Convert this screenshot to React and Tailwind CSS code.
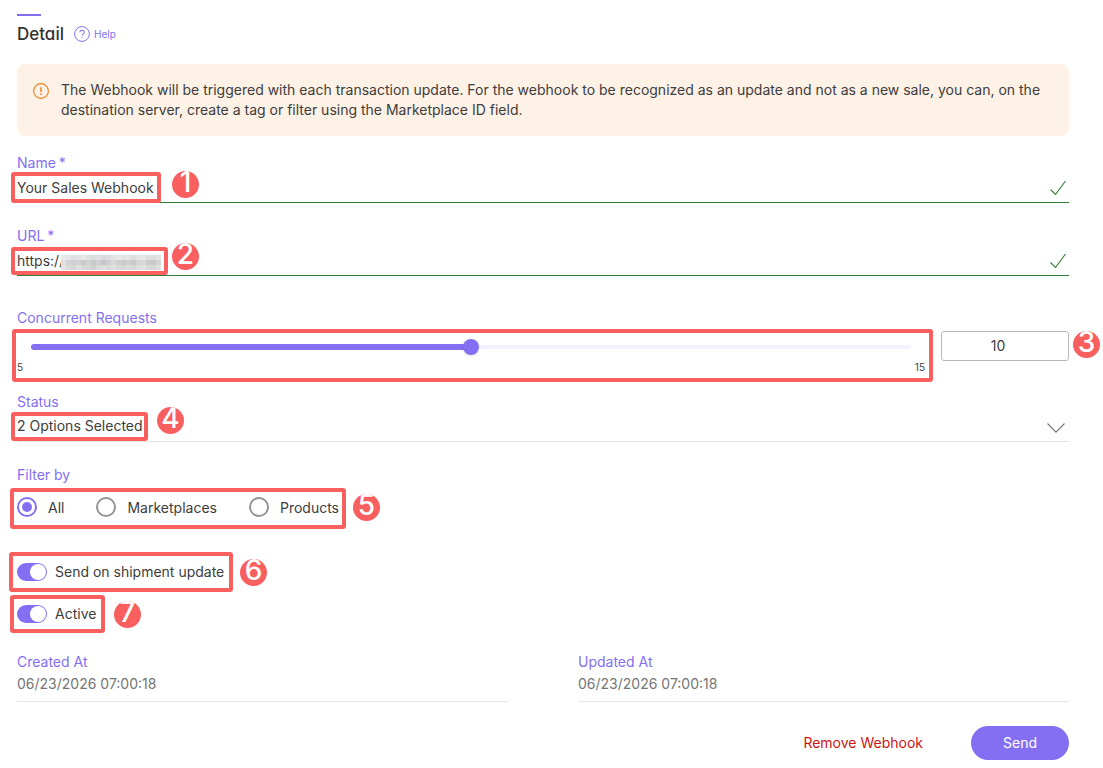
import { useState } from "react";

const labelClass = "block text-[14px] leading-5 text-[#846ff3]";

const mosaicRows = [
  ["#e8e8ea", "#e6e6e8", "#e0e0e2", "#e2e2e3", "#e6e6e6", "#e0e0e2", "#dcdede", "#e0e0e0", "#dadadc", "#dedede", "#e4e4e4", "#e8e8e8", "#e4e4e4", "#e6e6e6", "#dedede", "#e4e4e4", "#e8e8e8", "#e0e0e0", "#dedede", "#e4e4e4"],
  ["#e0e0e2", "#d2d2d4", "#d0d0d0", "#d4d4d6", "#cacaca", "#d0d0d2", "#c8caca", "#d0d0d2", "#c6c6c8", "#cecece", "#d8d8d8", "#d0d0d0", "#cacaca", "#d0d0d0", "#cacaca", "#d6d6d6", "#d8d8d8", "#cccccc", "#c8c8c8", "#d4d4d4"],
  ["#e4e4e4", "#dadada", "#d6d6d6", "#dedede", "#d8d8d8", "#d6d6d6", "#d0d0d2", "#dadada", "#dedede", "#dadada", "#e0e0e0", "#dadada", "#d6d6d6", "#dcdcdc", "#d8d8d8", "#dedede", "#e2e2e2", "#d8d8d8", "#d6d6d6", "#dedede"],
];

function Mosaic({ className }) {
  return (
    <svg aria-hidden="true" viewBox="0 0 100 15" className={className} shapeRendering="crispEdges">
      {mosaicRows.map((row, y) =>
        row.map((fill, x) => <rect key={`${x}-${y}`} x={x * 5} y={y * 5} width="5" height="5" fill={fill} />)
      )}
    </svg>
  );
}

function Frame({ className }) {
  return <span aria-hidden="true" className={`pointer-events-none absolute rounded-[3px] border-4 border-[#fa5f5f] ${className}`} />;
}

function Marker({ n, className }) {
  return (
    <span className={`pointer-events-none absolute flex size-[27px] justify-center overflow-hidden rounded-full bg-[#fa5f5f] text-[28px] font-medium leading-[22px] text-white ${className}`}>
      {n}
    </span>
  );
}

function Check() {
  return (
    <svg aria-hidden="true" viewBox="0 0 16 16" className="mr-[3px] size-4 shrink-0" fill="none" stroke="#2e7d32" strokeWidth="1.1">
      <path d="M0.5 9.5 L5.5 14.5 L15.5 1" />
    </svg>
  );
}

function TextField({ id, label, value, onChange, children }) {
  return (
    <div className="relative">
      <label htmlFor={id} className="flex gap-[3px] text-[14px] leading-5 text-[#846ff3]">
        <span>{label}</span>
        <span>*</span>
      </label>
      <div className="flex h-[30px] items-center border-b border-[#2e7d32]">
        <input id={id} value={value} onChange={(e) => onChange(e.target.value)} className="min-w-0 flex-1 bg-transparent text-[14px] leading-5 outline-none" />
        <Check />
      </div>
      {children}
    </div>
  );
}

function Radio({ label, checked, onChange }) {
  return (
    <label className="flex items-center gap-[11px] text-[14px]">
      <input
        type="radio"
        name="filter"
        checked={checked}
        onChange={onChange}
        className="size-5 appearance-none rounded-full border-2 border-[#949494] bg-white bg-clip-content p-[3px] checked:border-[#846ff3] checked:bg-[#846ff3]"
      />
      <span className="pt-[2px] leading-[18px]">{label}</span>
    </label>
  );
}

function Toggle({ label, checked, onChange }) {
  return (
    <label className="flex items-center gap-2 text-[14px] leading-5">
      <input
        type="checkbox"
        role="switch"
        checked={checked}
        onChange={(e) => onChange(e.target.checked)}
        className="flex h-[18px] w-[30px] appearance-none items-center rounded-full bg-[#b5b5b5] px-px before:size-4 before:rounded-full before:bg-white checked:justify-end checked:bg-[#846ff3]"
      />
      {label}
    </label>
  );
}

function DateField({ label, value }) {
  return (
    <div className="border-b border-[#e4e4e4] pb-[7px]">
      <div className={labelClass}>{label}</div>
      <div className="mt-[2px] text-[14px] leading-5 text-[#757575]">{value}</div>
    </div>
  );
}

export default function App() {
  const [name, setName] = useState("Your Sales Webhook");
  const [url, setUrl] = useState("https://");
  const [requests, setRequests] = useState(10);
  const [filter, setFilter] = useState("All");
  const [shipment, setShipment] = useState(true);
  const [active, setActive] = useState(true);

  return (
    <main className="min-h-screen bg-white pt-[14px] pr-[34px] pb-2 pl-[17px] font-['Inter',sans-serif] text-[14px] text-[#3d3d3d]">
      <div className="h-[2px] w-6 bg-[#846ff3]" />
      <header className="mt-[6px] flex h-6 items-center gap-[10px]">
        <h1 className="text-[17px] font-medium leading-6 text-[#333] [font-feature-settings:'cv11']">Detail</h1>
        <a href="#help" className="flex items-center gap-1 text-[10px] leading-4 text-[#846ff3]">
          <svg aria-hidden="true" viewBox="0 0 16 16" className="size-4" fill="none" stroke="currentColor">
            <circle cx="8" cy="8" r="7.4" />
            <path d="M5.9 6.3a2.1 2.1 0 1 1 3.2 1.8C8.4 8.6 8 8.9 8 9.8" strokeWidth="1.1" />
            <circle cx="8" cy="11.6" r=".7" fill="currentColor" stroke="none" />
          </svg>
          Help
        </a>
      </header>

      <div className="mt-[18px] flex gap-3 rounded-lg bg-[#fef1e6] p-4">
        <svg aria-hidden="true" viewBox="0 0 16 16" className="mt-[3px] size-4 shrink-0" fill="none" stroke="#ee7f1b">
          <circle cx="8" cy="8" r="7.4" strokeWidth="1.1" />
          <path d="M8 4.2V9" strokeWidth="1.5" />
          <circle cx="8" cy="11.1" r=".9" fill="#ee7f1b" stroke="none" />
        </svg>
        <p className="text-[14px] leading-5">
          The Webhook will be triggered with each transaction update. For the webhook to be recognized as an update and not as a new sale, you can, on the destination server, create a tag or filter using the Marketplace ID field.
        </p>
      </div>

      <form className="mt-[17px]" onSubmit={(e) => e.preventDefault()}>
        <TextField id="name" label="Name" value={name} onChange={setName}>
          <Frame className="top-[19px] -left-[6px] h-[31px] w-[150px]" />
          <Marker n="1" className="top-[18px] left-[155px]" />
        </TextField>

        <div className="mt-[23px]">
          <TextField id="url" label="URL" value={url} onChange={setUrl}>
            <Mosaic className="absolute top-[29px] left-[44px] h-[15px] w-[100px]" />
            <Frame className="top-[21px] -left-[6px] h-7 w-[157px]" />
            <Marker n="2" className="top-[17px] left-[155px]" />
          </TextField>
        </div>

        <div className="relative mt-8">
          <label htmlFor="requests" className={labelClass}>Concurrent Requests</label>
          <div className="mt-[3px] flex items-start gap-4">
            <div className="flex-1">
              <div className="relative mx-[14px] flex h-8 items-center">
                <div className="h-1 w-full rounded-full bg-[#f3f1fe]" />
                <div className="absolute left-0 h-[6px] rounded-full bg-[#846ff3]" style={{ width: `${(requests - 5) * 10}%` }} />
                <input
                  id="requests"
                  type="range"
                  min="5"
                  max="15"
                  value={requests}
                  onChange={(e) => setRequests(Number(e.target.value))}
                  className="absolute inset-x-0 w-full appearance-none bg-transparent [&::-webkit-slider-thumb]:size-4 [&::-webkit-slider-thumb]:appearance-none [&::-webkit-slider-thumb]:rounded-full [&::-webkit-slider-thumb]:bg-[#846ff3] [&::-webkit-slider-thumb]:shadow"
                />
              </div>
              <div className="flex justify-between text-[10px] leading-2">
                <span>5</span>
                <span>15</span>
              </div>
            </div>
            <input
              aria-label="Concurrent requests value"
              type="text"
              value={requests}
              onChange={(e) => setRequests(Math.min(15, Math.max(5, Number(e.target.value) || 5)))}
              className="h-[30px] w-32 rounded-[3px] border border-[#b8b8b8] pr-[14px] pb-[2px] text-center text-[14px] leading-5 outline-none"
            />
          </div>
          <Frame className="top-[21px] right-[136px] -left-[5px] h-[53px]" />
          <Marker n="3" className="top-[23px] -right-[31px]" />
        </div>

        <div className="relative mt-[21px]">
          <label htmlFor="status" className={labelClass}>Status</label>
          <button id="status" type="button" className="flex h-[30px] w-full items-center justify-between border-b border-[#e4e4e4] pr-1 text-left leading-5">
            <span className="pb-[2px]">2 Options Selected</span>
            <svg aria-hidden="true" viewBox="0 0 18 10" className="mt-[2px] h-[10px] w-[18px]" fill="none" stroke="#757575" strokeWidth="1.1">
              <path d="M.5.5 9 9.2 17.5.5" />
            </svg>
          </button>
          <Frame className="top-5 -left-[6px] h-[29px] w-[137px]" />
          <Marker n="4" className="top-[15px] left-[140px]" />
        </div>

        <fieldset className="mt-[23px]">
          <legend className={labelClass}>Filter by</legend>
          <div className="relative mt-3">
            <div className="flex items-center gap-8">
              {["All", "Marketplaces", "Products"].map((option) => (
                <Radio key={option} label={option} checked={filter === option} onChange={() => setFilter(option)} />
              ))}
            </div>
            <Frame className="-top-[9px] -left-[7px] h-[41px] w-[336px]" />
            <Marker n="5" className="-top-[3px] left-[336px]" />
          </div>
        </fieldset>

        <div className="relative mt-[45px]">
          <Toggle label="Send on shipment update" checked={shipment} onChange={setShipment} />
          <Frame className="-top-[10px] -left-[8px] h-10 w-[224px]" />
          <Marker n="6" className="-top-[3px] left-[223px]" />
        </div>
        <div className="relative mt-[22px]">
          <Toggle label="Active" checked={active} onChange={setActive} />
          <Frame className="-top-[9px] -left-[7px] h-[38px] w-[95px]" />
          <Marker n="7" className="-top-[3px] left-[97px]" />
        </div>

        <div className="mt-7 grid grid-cols-2 gap-[70px]">
          <DateField label="Created At" value="06/23/2026 07:00:18" />
          <DateField label="Updated At" value="06/23/2026 07:00:18" />
        </div>

        <div className="mt-6 flex items-center justify-end gap-12">
          <button type="button" className="text-[14px] leading-5 text-[#cc1414]">Remove Webhook</button>
          <button type="submit" className="h-[34px] rounded-full bg-[#846ff3] px-8 text-[14px] leading-5 text-white">Send</button>
        </div>
      </form>
    </main>
  );
}
